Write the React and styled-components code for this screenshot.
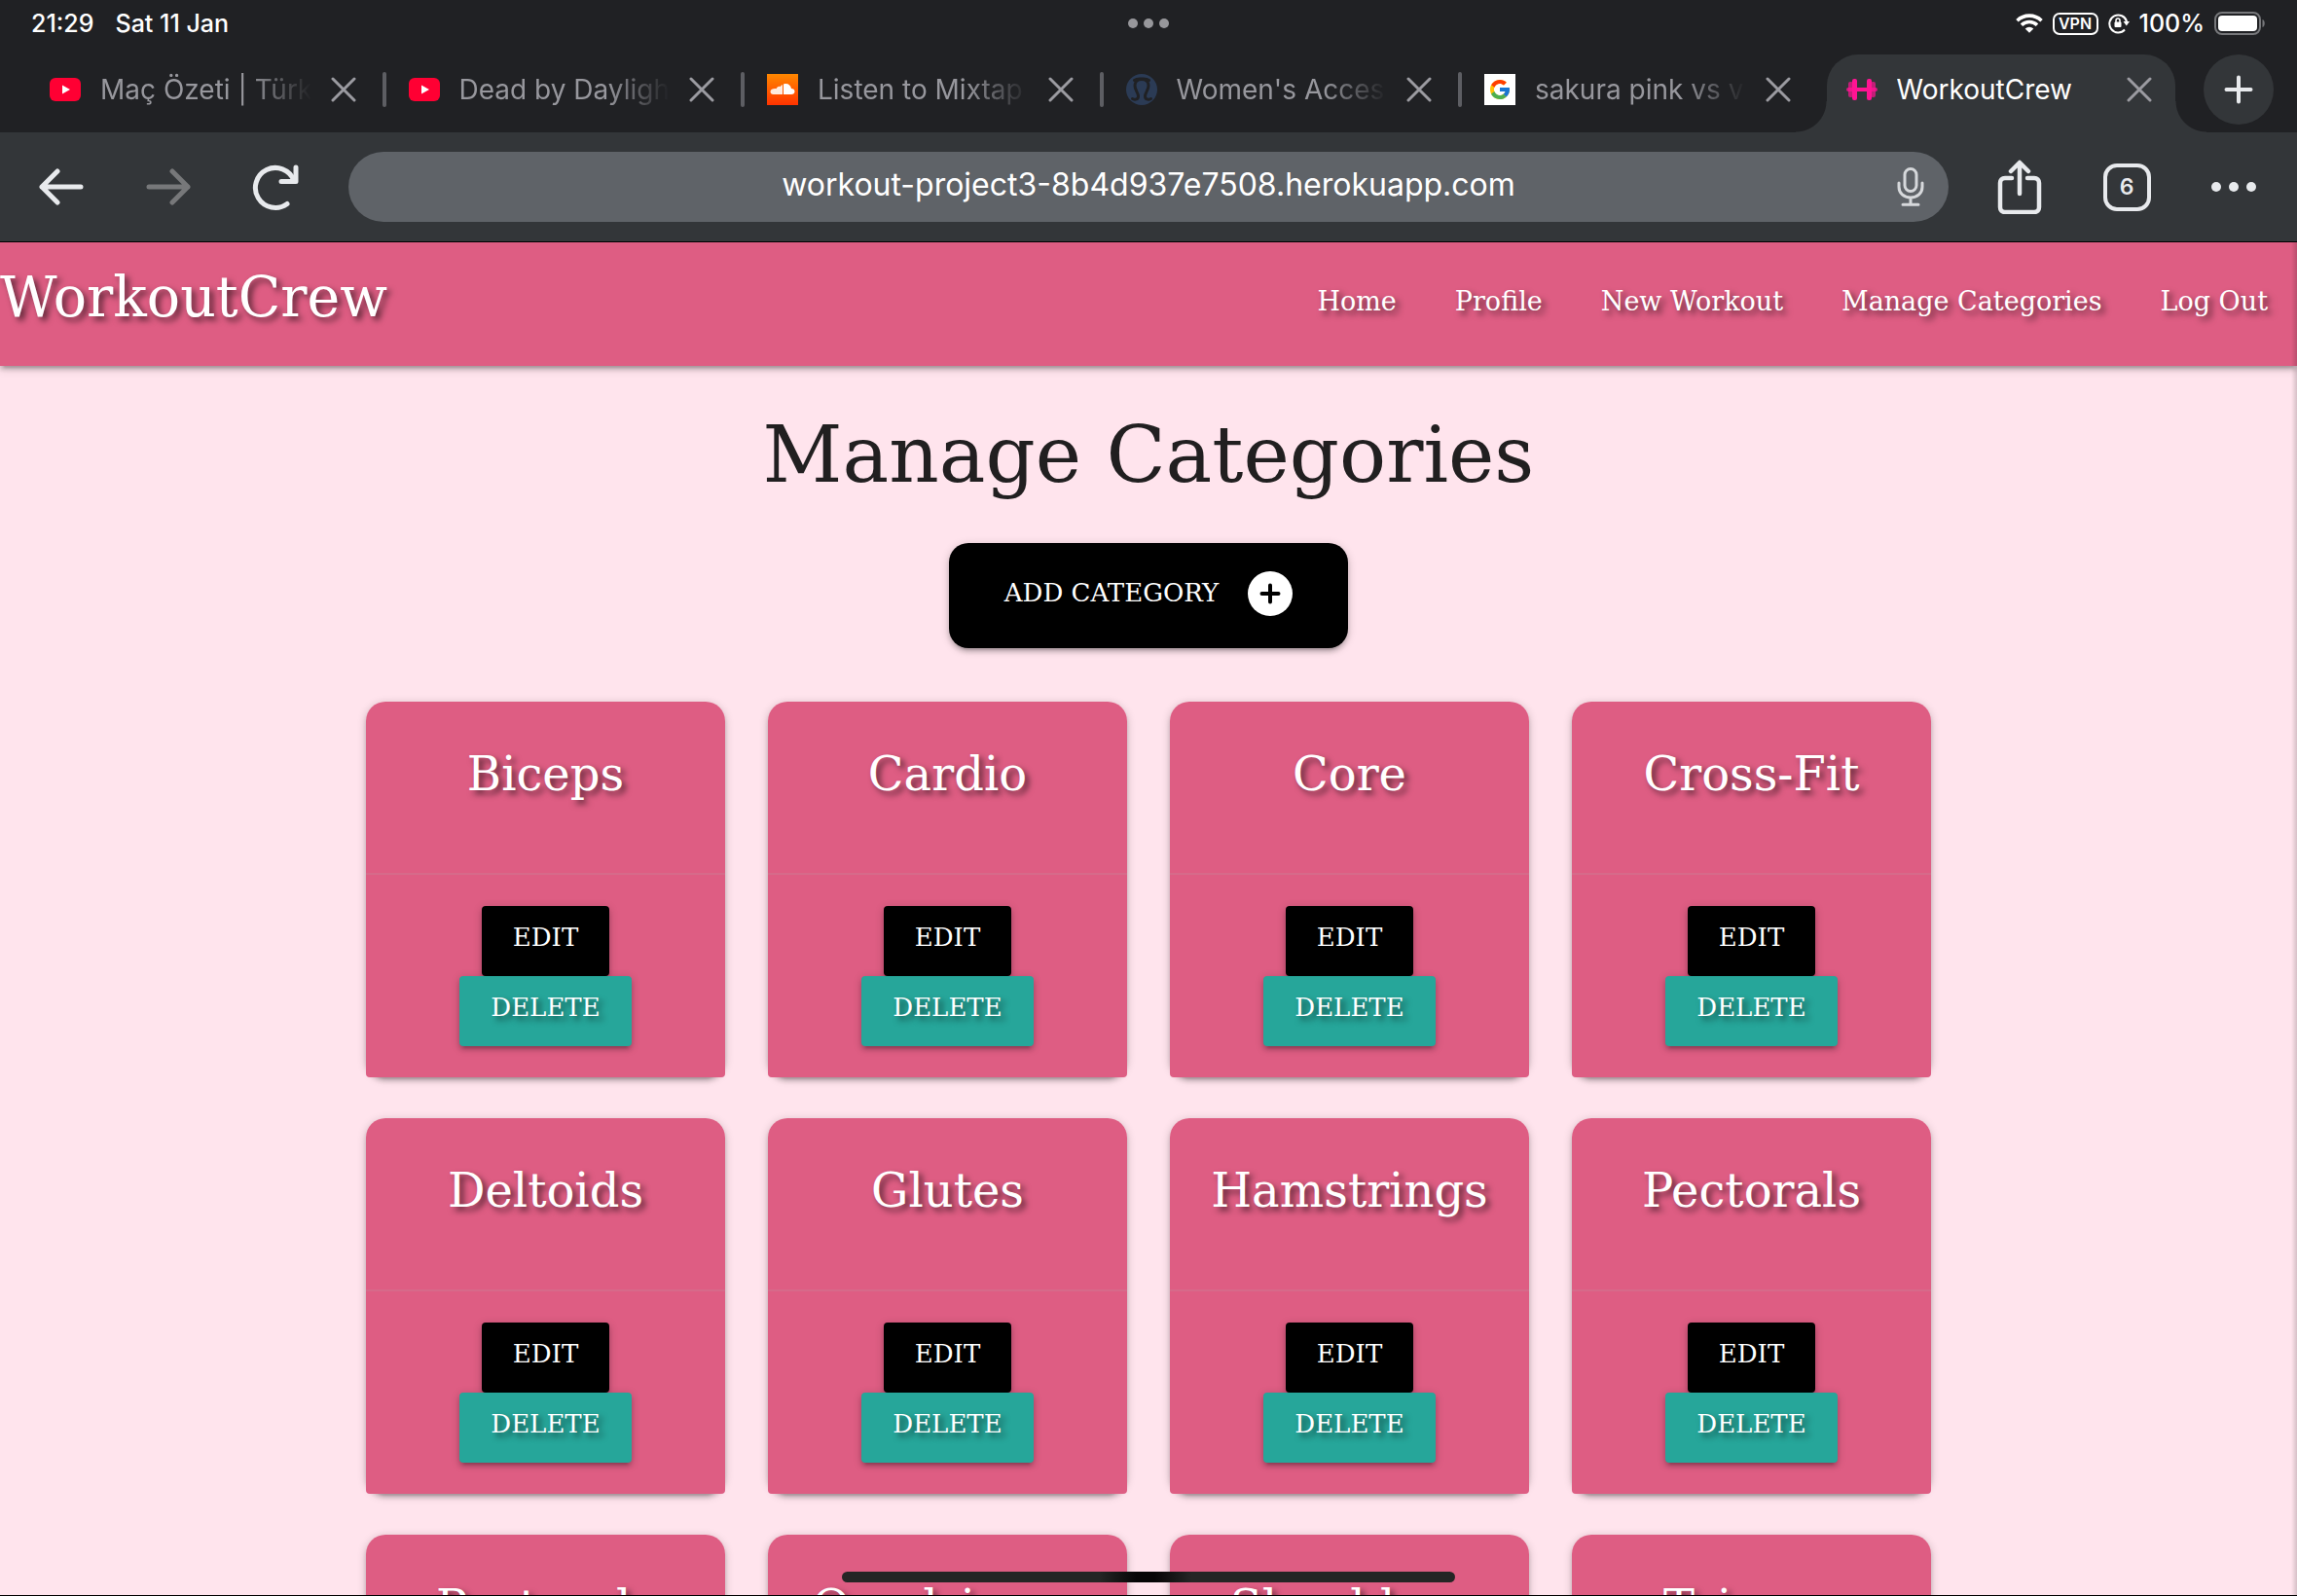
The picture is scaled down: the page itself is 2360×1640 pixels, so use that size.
import React from "react";
import styled, { createGlobalStyle, css } from "styled-components";
import { FcGoogle } from "react-icons/fc";

const slab = '"DejaVu Serif", "Liberation Serif", serif';
const sans = 'Inter, Roboto, "Liberation Sans", sans-serif';
const pink = "#de5d83";
const strip = "#202124";
const bar = "#333639";

const GlobalStyle = createGlobalStyle`
  *, *::before, *::after { box-sizing: border-box; }
  html, body, #root { height: 100%; }
  body { margin: 0; overflow: hidden; background: ${strip}; }
  button { border: 0; padding: 0; background: none; color: inherit; font: inherit; }
  svg { display: block; flex: none; }
`;

const Screen = styled.div`
  height: 100%;
  display: flex;
  flex-direction: column;
  font-family: ${sans};
  border-bottom: 1px solid #000;
`;

/* ---------- status bar ---------- */
const StatusBar = styled.div`
  display: grid;
  grid-template-columns: 1fr auto 1fr;
  align-items: center;
  height: 48px;
  padding: 0 32px;
  color: #fff;
  font-size: 25px;
  font-weight: 500;
`;
const Clock = styled.div`
  display: flex;
  gap: 22px;
`;
const Dots = styled.div`
  display: flex;
  gap: 6px;
`;
const Dot = styled.span`
  width: 10px;
  height: 10px;
  border-radius: 50%;
  background: #97979b;
`;
const StatusIcons = styled.div`
  display: flex;
  justify-content: flex-end;
  align-items: center;
  gap: 10px;
`;
const Vpn = styled.span`
  border: 2px solid #fff;
  border-radius: 7px;
  width: 47px;
  height: 23px;
  text-align: center;
  font-size: 16px;
  line-height: 19px;
  font-weight: 600;
`;

/* ---------- tabs ---------- */
const TabStrip = styled.div`
  display: flex;
  align-items: flex-end;
  height: 88px;
  padding: 0 24px 0 26px;
  gap: 24px;
`;
const TabList = styled.div`
  display: flex;
  flex: 1;
  min-width: 0;
  height: 80px;
`;
const Tab = styled.div`
  position: relative;
  flex: 1;
  min-width: 0;
  display: flex;
  align-items: center;
  gap: 20px;
  padding: 0 29px 8px 25px;
  color: #97979d;
  ${(p) =>
    p.$divided &&
    css`
      &::after {
        content: "";
        position: absolute;
        right: -2px;
        top: 18px;
        width: 4px;
        height: 36px;
        border-radius: 2px;
        background: #5d5e63;
      }
    `}
  ${(p) =>
    p.$active &&
    css`
      margin: 0 5px 0 8px;
      padding: 0 24px 8px 20px;
      border-radius: 32px 32px 0 0;
      background: ${bar};
      color: #fff;
      &::before,
      &::after {
        content: "";
        position: absolute;
        bottom: 0;
        width: 32px;
        height: 32px;
      }
      &::before {
        right: 100%;
        background: radial-gradient(circle at 0 0, transparent 31px, ${bar} 32px);
      }
      &::after {
        left: 100%;
        background: radial-gradient(circle at 100% 0, transparent 31px, ${bar} 32px);
      }
    `}
`;
const TabTitle = styled.span`
  flex: 1;
  min-width: 0;
  overflow: hidden;
  white-space: nowrap;
  font-size: 28px;
  line-height: 36px;
  ${(p) =>
    p.$fade &&
    css`
      mask-image: linear-gradient(to right, #000 calc(100% - 64px), transparent);
    `}
`;
const CloseButton = styled.button`
  width: 26px;
  height: 26px;
  color: #9b9ba1;
`;
const NewTab = styled.button`
  display: grid;
  place-items: center;
  flex: none;
  width: 72px;
  height: 72px;
  margin-bottom: 8px;
  border-radius: 50%;
  background: ${bar};
  color: #e8eaed;
`;

/* ---------- toolbar ---------- */
const Toolbar = styled.div`
  display: flex;
  align-items: center;
  height: 113px;
  padding: 0 10px 0 8px;
  background: ${bar};
  border-bottom: 1px solid #000;
  color: #e8eaed;
`;
const ToolButton = styled.button`
  display: grid;
  place-items: center;
  width: 110px;
  height: 72px;
  color: ${(p) => (p.$dim ? "#77787a" : "#e8eaed")};
`;
const Address = styled.label`
  flex: 1;
  display: flex;
  align-items: center;
  height: 72px;
  margin: 0 18px 0 20px;
  padding-left: 78px;
  border-radius: 36px;
  background: #5f6368;
`;
const AddressInput = styled.input`
  flex: 1;
  min-width: 0;
  padding: 0 0 4px;
  border: 0;
  outline: 0;
  background: none;
  color: #fff;
  font: 400 32px/40px ${sans};
  text-align: center;
`;
const MicButton = styled.button`
  display: grid;
  place-items: center;
  width: 78px;
  height: 72px;
  color: #d6d8db;
`;
const TabCount = styled.span`
  display: grid;
  place-items: center;
  width: 49px;
  height: 49px;
  border: 4px solid #e8eaed;
  border-radius: 14px;
  font-size: 23px;
  font-weight: 600;
`;
const MoreDots = styled(Dots)`
  gap: 8px;
  ${Dot} {
    background: #e8eaed;
  }
`;

/* ---------- site ---------- */
const Page = styled.div`
  position: relative;
  flex: 1;
  min-height: 0;
  overflow: hidden;
  background: #ffe4ed;
  font-family: ${slab};
  &::after {
    content: "";
    position: absolute;
    inset: 0 0 0 auto;
    width: 6px;
    background: linear-gradient(to right, transparent, rgba(0, 0, 0, 0.16));
  }
`;
const raised = css`
  box-shadow: 0 4px 4px 0 rgba(0, 0, 0, 0.14), 0 6px 2px -4px rgba(0, 0, 0, 0.12),
    0 2px 10px 0 rgba(0, 0, 0, 0.2);
`;
const textShade = css`
  text-shadow: 4px 4px 6px rgba(0, 0, 0, 0.6);
`;
const Nav = styled.nav`
  display: flex;
  align-items: center;
  justify-content: space-between;
  height: 127px;
  padding: 0 30px 6px 0;
  background: ${pink};
  ${raised}
`;
const Brand = styled.a`
  padding-bottom: 10px;
  color: #fff;
  font-size: 57px;
  line-height: 72px;
  text-decoration: none;
  ${textShade}
`;
const NavLinks = styled.div`
  display: flex;
  gap: 60px;
`;
const NavLink = styled.a`
  color: #fff;
  font-size: 27px;
  line-height: 40px;
  text-decoration: none;
  ${textShade}
`;
const Main = styled.main`
  display: flex;
  flex-direction: column;
  align-items: center;
  padding-top: 48px;
`;
const Title = styled.h1`
  margin: 0 0 46px;
  color: #211f20;
  font-size: 80px;
  font-weight: 400;
  line-height: 88px;
`;
const AddButton = styled.button`
  display: flex;
  align-items: center;
  gap: 30px;
  height: 108px;
  padding: 0 57px 4px;
  border-radius: 20px;
  background: #000;
  color: #fff;
  font-size: 26px;
  line-height: 40px;
  text-transform: uppercase;
  ${raised}
`;
const AddLabel = styled.span`
  padding-bottom: 2px;
`;
const Grid = styled.div`
  display: grid;
  grid-template-columns: repeat(4, minmax(0, 1fr));
  gap: 42px 44px;
  width: 70%;
  margin-top: 55px;
  padding: 0 22px;
`;
const Card = styled.article`
  border-radius: 20px;
  text-align: center;
  ${raised}
`;
const CardTitle = styled.h2`
  margin: 0;
  padding: 43px 0 71px;
  border-radius: 20px 20px 0 0;
  background: ${pink};
  color: #fff;
  font-size: 48px;
  font-weight: 400;
  line-height: 62px;
  ${textShade}
`;
const CardActions = styled.div`
  display: flex;
  flex-direction: column;
  align-items: center;
  padding: 32px 0;
  border-top: 2px solid #d66a8a;
  border-radius: 0 0 4px 4px;
  background: ${pink};
`;
const ActionButton = styled.button`
  height: 72px;
  padding: 0 32px 8px;
  border-radius: 4px;
  background: ${(p) => (p.$danger ? "#26a69a" : "#000")};
  color: #fff;
  font-size: 26px;
  line-height: 64px;
  text-transform: uppercase;
  ${raised}
  ${(p) => p.$danger && textShade}
`;
const HomeBar = styled.div`
  position: fixed;
  left: 50%;
  bottom: 14px;
  width: 630px;
  height: 11px;
  margin-left: -315px;
  border-radius: 6px;
  background: linear-gradient(to right, #252525 42%, #060606 48%, #060606 51%, #252525 57%);
`;

/* ---------- icons ---------- */
const YouTube = () => (
  <svg width="32" height="32" viewBox="0 0 32 32">
    <rect y="4" width="32" height="24" rx="6" fill="#ff0033" />
    <path d="M13 11.5v9l8-4.500z" fill="#fff" />
  </svg>
);
const SoundCloud = () => (
  <svg width="32" height="32" viewBox="0 0 32 32">
    <defs>
      <linearGradient id="sc" x1="0" y1="0" x2="0" y2="1">
        <stop offset="0" stopColor="#ff8800" />
        <stop offset="1" stopColor="#ff3300" />
      </linearGradient>
    </defs>
    <rect width="32" height="32" fill="url(#sc)" />
    <path d="M17 10.500c4-1.500 7.500.8 8 4.500 2 0 3.500 1.200 3.500 3s-1.500 3-3.500 3h-8z" fill="#fff" />
    <path d="M16 11c-1 .3-1.700 1-2.200 2-2-.6-3.600.4-4.200 2.200C6.500 14.800 3.500 16 3.500 18.200c0 1.600 1.200 2.800 3 2.800H16z" fill="#fff" opacity=".88" />
  </svg>
);
const Omega = () => (
  <svg width="32" height="32" viewBox="0 0 32 32">
    <circle cx="16" cy="16" r="16" fill="#2b3b55" />
    <path
      d="M8.500 6.500C11 4.500 13.500 5 16 5s5-.5 7.500 1.500M6.500 25.500c3 1.500 6 .5 6-2.500 0-4-3.500-6-3.500-11 0-4 3-6.500 7-6.500s7 2.500 7 6.500c0 5-3.500 7-3.500 11 0 3 3 4 6 2.500"
      fill="none"
      stroke={strip}
      strokeWidth="3"
      strokeLinecap="round"
    />
  </svg>
);
const GoogleBox = styled.span`
  display: grid;
  place-items: center;
  flex: none;
  width: 32px;
  height: 32px;
  background: #fff;
`;
const Google = () => (
  <GoogleBox>
    <FcGoogle size={24} />
  </GoogleBox>
);
const Dumbbell = () => (
  <svg width="32" height="32" viewBox="0 0 32 32" fill="#ff1493">
    <rect x="0" y="14" width="32" height="4" rx="2" opacity=".8" />
    <rect x="2" y="8" width="5" height="16" rx="2" opacity=".7" />
    <rect x="25" y="8" width="5" height="16" rx="2" opacity=".7" />
    <rect x="6" y="5" width="5" height="22" rx="2" />
    <rect x="21" y="5" width="5" height="22" rx="2" />
    <rect x="10" y="14" width="12" height="4" />
  </svg>
);
const Cross = () => (
  <svg width="26" height="26" viewBox="0 0 26 26" fill="none" stroke="currentColor" strokeWidth="3" strokeLinecap="round">
    <path d="M2 2l22 22M24 2L2 24" />
  </svg>
);
const Plus = () => (
  <svg width="32" height="32" viewBox="0 0 32 32" fill="none" stroke="currentColor" strokeWidth="4" strokeLinecap="round">
    <path d="M16 3.500v25M3.500 16h25" />
  </svg>
);
const Arrow = ({ forward }) => (
  <svg width="46" height="38" viewBox="0 0 46 38" fill="none" stroke="currentColor" strokeWidth="5" strokeLinecap="round" strokeLinejoin="round">
    <path d={forward ? "M3 19h40M27 3l16 16-16 16" : "M43 19H3M19 3L3 19l16 16"} />
  </svg>
);
const Reload = () => (
  <svg width="48" height="48" viewBox="0 0 48 48" fill="none" stroke="currentColor" strokeWidth="5" strokeLinecap="round" strokeLinejoin="round">
    <path d="M36 41.500A20.500 20.500 0 1 1 43 17.500" />
    <path d="M45 4v14.500H30" />
  </svg>
);
const Mic = () => (
  <svg width="30" height="40" viewBox="0 0 30 40" fill="none" stroke="currentColor" strokeWidth="3" strokeLinecap="round">
    <rect x="9" y="1.500" width="12" height="23" rx="6" />
    <path d="M3 16v4c0 6.500 5 11 12 11s12-4.500 12-11v-4M15 31v7M7 38.200h16" />
  </svg>
);
const Share = () => (
  <svg width="46" height="56" viewBox="0 0 46 56" fill="none" stroke="currentColor" strokeWidth="4.500" strokeLinecap="round" strokeLinejoin="round">
    <path d="M15 19H8c-3 0-5 2-5 5v25c0 3 2 5 5 5h30c3 0 5-2 5-5V24c0-3-2-5-5-5h-7M23 35V4M14 12l9-9 9 9" />
  </svg>
);
const Wifi = () => (
  <svg width="28" height="22" viewBox="0 0 28 22" fill="none" stroke="#fff" strokeWidth="3.600">
    <path d="M1.500 8.200a18 18 0 0 1 25 0M6 12.800a11.500 11.500 0 0 1 16 0" />
    <path d="M14 20.800l-4.300-4.300a6.200 6.200 0 0 1 8.600 0z" fill="#fff" stroke="none" />
  </svg>
);
const RotationLock = () => (
  <svg width="22" height="22" viewBox="0 0 22 22" fill="none" stroke="#fff" strokeWidth="2">
    <path d="M17 17.500A9 9 0 1 1 19 9" />
    <path d="M15.500 9h6.500l-3.200 4.500z" fill="#fff" stroke="none" />
    <rect x="6.500" y="9.500" width="7" height="5.500" rx="1" fill="#fff" stroke="none" />
    <path d="M8 10V8a2 2 0 0 1 4 0v2" strokeWidth="1.500" />
  </svg>
);
const Battery = () => (
  <svg width="53" height="24" viewBox="0 0 53 24">
    <rect x="1" y="1" width="46" height="22" rx="7" fill="none" stroke="#77787b" strokeWidth="2" />
    <rect x="4" y="4" width="40" height="16" rx="4" fill="#fff" />
    <path d="M49.500 8c3 1 3 7 0 8z" fill="#77787b" />
  </svg>
);
const PlusDisc = () => (
  <svg width="46" height="46" viewBox="0 0 46 46">
    <circle cx="23" cy="23" r="23" fill="#fff" />
    <path d="M23 14.500v17M14.500 23h17" stroke="#000" strokeWidth="4" strokeLinecap="round" />
  </svg>
);

const tabs = [
  { title: "Maç Özeti | Türk", Icon: YouTube },
  { title: "Dead by Dayligh", Icon: YouTube },
  { title: "Listen to Mixtap", Icon: SoundCloud },
  { title: "Women's Acces", Icon: Omega },
  { title: "sakura pink vs v", Icon: Google },
  { title: "WorkoutCrew", Icon: Dumbbell, active: true },
];
const links = ["Home", "Profile", "New Workout", "Manage Categories", "Log Out"];
const categories = [
  "Biceps", "Cardio", "Core", "Cross-Fit",
  "Deltoids", "Glutes", "Hamstrings", "Pectorals",
  "Pectorals", "Quadriceps", "Shoulders", "Triceps",
];

export default function App() {
  return (
    <Screen>
      <GlobalStyle />
      <StatusBar>
        <Clock>
          <span>21:29</span>
          <span>Sat 11 Jan</span>
        </Clock>
        <Dots>
          <Dot />
          <Dot />
          <Dot />
        </Dots>
        <StatusIcons>
          <Wifi />
          <Vpn>VPN</Vpn>
          <RotationLock />
          <span>100%</span>
          <Battery />
        </StatusIcons>
      </StatusBar>

      <TabStrip>
        <TabList>
          {tabs.map(({ title, Icon, active }, i) => (
            <Tab key={title} $active={active} $divided={i < tabs.length - 2}>
              <Icon />
              <TabTitle $fade={!active}>{title}</TabTitle>
              <CloseButton aria-label={`Close ${title}`}>
                <Cross />
              </CloseButton>
            </Tab>
          ))}
        </TabList>
        <NewTab aria-label="New tab">
          <Plus />
        </NewTab>
      </TabStrip>

      <Toolbar>
        <ToolButton aria-label="Back">
          <Arrow />
        </ToolButton>
        <ToolButton aria-label="Forward" $dim>
          <Arrow forward />
        </ToolButton>
        <ToolButton aria-label="Reload">
          <Reload />
        </ToolButton>
        <Address>
          <AddressInput aria-label="Address" defaultValue="workout-project3-8b4d937e7508.herokuapp.com" />
          <MicButton aria-label="Voice search">
            <Mic />
          </MicButton>
        </Address>
        <ToolButton aria-label="Share">
          <Share />
        </ToolButton>
        <ToolButton aria-label="Open tabs">
          <TabCount>6</TabCount>
        </ToolButton>
        <ToolButton aria-label="More">
          <MoreDots>
            <Dot />
            <Dot />
            <Dot />
          </MoreDots>
        </ToolButton>
      </Toolbar>

      <Page>
        <Nav>
          <Brand href="#">WorkoutCrew</Brand>
          <NavLinks>
            {links.map((label) => (
              <NavLink key={label} href="#">
                {label}
              </NavLink>
            ))}
          </NavLinks>
        </Nav>
        <Main>
          <Title>Manage Categories</Title>
          <AddButton>
            <AddLabel>Add Category</AddLabel>
            <PlusDisc />
          </AddButton>
          <Grid>
            {categories.map((name, i) => (
              <Card key={i}>
                <CardTitle>{name}</CardTitle>
                <CardActions>
                  <ActionButton>Edit</ActionButton>
                  <ActionButton $danger>Delete</ActionButton>
                </CardActions>
              </Card>
            ))}
          </Grid>
        </Main>
      </Page>
      <HomeBar />
    </Screen>
  );
}
